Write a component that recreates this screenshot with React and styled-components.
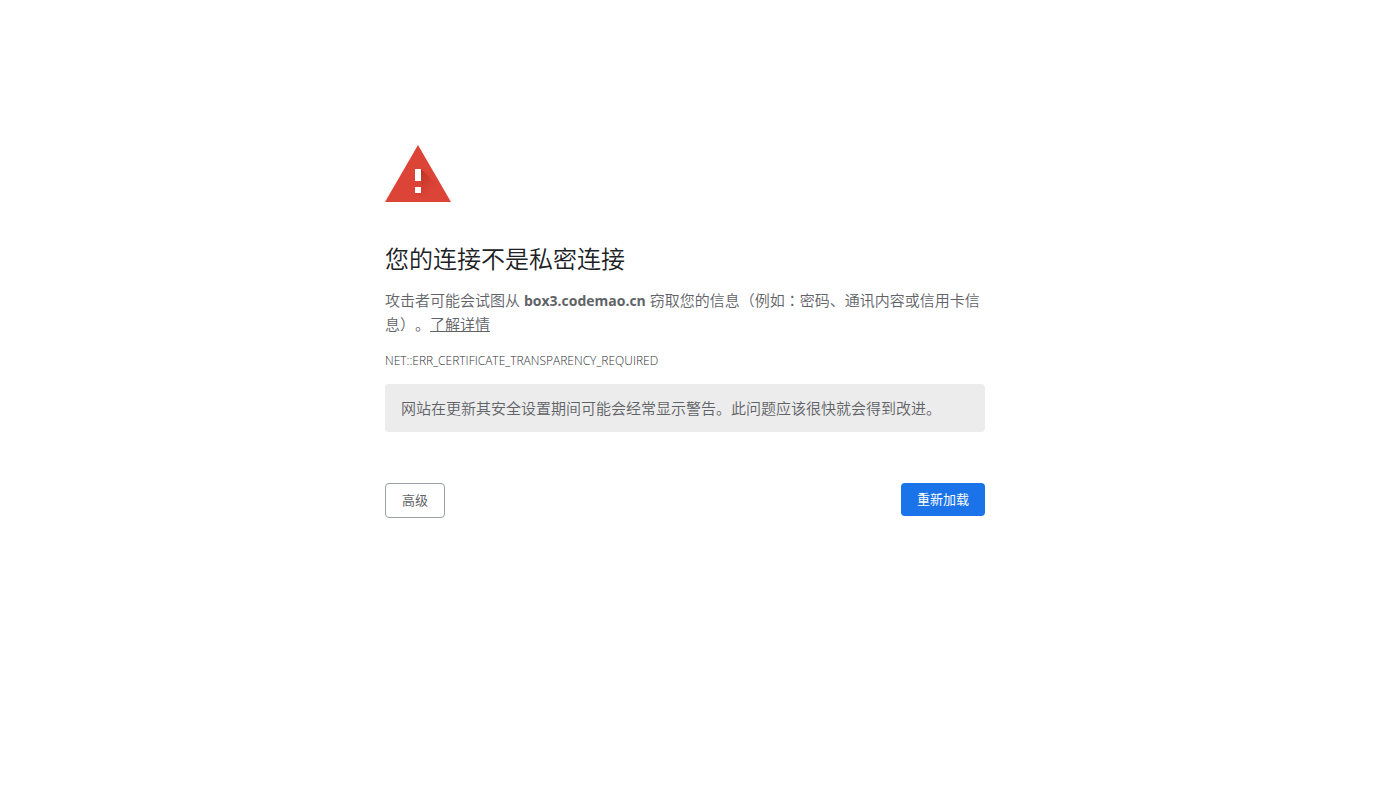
import React from "react";
import styled, { createGlobalStyle } from "styled-components";

const GlobalStyle = createGlobalStyle`
  *, *::before, *::after { box-sizing: border-box; }
  body {
    margin: 0;
    background: #fff;
    color: #5f6368;
    font-family: "Open Sans", "Noto Sans CJK SC", sans-serif;
    font-size: 15px;
    font-weight: 350;
    line-height: 24px;
    text-spacing-trim: space-all;
  }
`;

const Page = styled.div`
  padding: 145px 33px 40px 24px;
`;

const Content = styled.main`
  width: 100%;
  max-width: 600px;
  margin: 0 auto;
`;

const WarningIcon = styled.svg`
  display: block;
  width: 66px;
  height: 57px;
`;

const Title = styled.h1`
  margin: 41px 0 13px;
  color: #202124;
  font-size: 24px;
  font-weight: 350;
  line-height: 32px;
`;

const Message = styled.p`
  margin: 0;
`;

const Host = styled.strong`
  font-size: 14px;
  font-weight: 700;
  line-height: 1;
`;

const Centered = styled.span`
  font-family: "Noto Sans CJK TC", sans-serif;
  line-height: 1;
`;

const LearnMore = styled.a`
  color: inherit;
  text-decoration: underline;
`;

const ErrorCode = styled.p`
  margin: 16px 0 14px;
  color: #303236;
  font-size: 12px;
  font-weight: 300;
  line-height: 18px;
  overflow-wrap: anywhere;
`;

const Notice = styled.p`
  margin: 0;
  padding: 12px 16px;
  border-radius: 4px;
  background: #ececec;
`;

const Actions = styled.div`
  display: flex;
  align-items: flex-start;
  justify-content: space-between;
  margin-top: 51px;
`;

const Button = styled.button`
  padding: 8px 16px;
  border: ${({ $primary }) => ($primary ? "0" : "1px solid #9aa0a6")};
  border-radius: 4px;
  background: ${({ $primary }) => ($primary ? "#1a73e8" : "#fff")};
  color: ${({ $primary }) => ($primary ? "#fff" : "#5f6368")};
  font-family: inherit;
  font-size: 13px;
  line-height: 17px;
  cursor: pointer;
`;

export default function App() {
  return (
    <>
      <GlobalStyle />
      <Page lang="zh-CN">
        <Content>
          <WarningIcon viewBox="0 0 66 57" aria-hidden="true">
            <defs>
              <linearGradient id="shade" x1="30" y1="24" x2="56" y2="50" gradientUnits="userSpaceOnUse">
                <stop offset="0" stopColor="#a52714" stopOpacity="0.7" />
                <stop offset="0.7" stopColor="#a52714" stopOpacity="0" />
              </linearGradient>
            </defs>
            <path d="M33 0 66 57H0Z" fill="#db4437" />
            <path d="M36 24 55 43 63 57H45L30 48V42H36Z" fill="url(#shade)" />
            <path d="M30 24h6v12h-6zM30 42h6v6h-6z" fill="#fff" />
          </WarningIcon>
          <Title>您的连接不是私密连接</Title>
          <Message>
            攻击者可能会试图从 <Host>box3.codemao.cn</Host>{" "}
            窃取您的信息（例如<Centered lang="zh-TW">：</Centered>密码、通讯内容或信用卡信息）。<LearnMore href="#">了解详情</LearnMore>
          </Message>
          <ErrorCode>NET::ERR_CERTIFICATE_TRANSPARENCY_REQUIRED</ErrorCode>
          <Notice>网站在更新其安全设置期间可能会经常显示警告。此问题应该很快就会得到改进。</Notice>
          <Actions>
            <Button type="button">高级</Button>
            <Button type="button" $primary>重新加载</Button>
          </Actions>
        </Content>
      </Page>
    </>
  );
}
